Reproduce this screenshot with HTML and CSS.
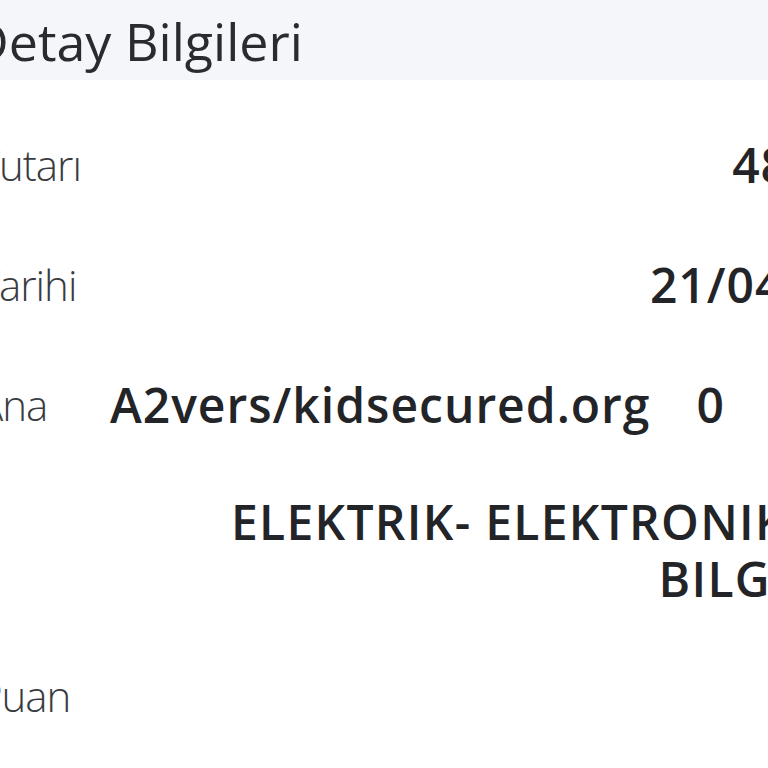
FILE: index.html
```html
<!DOCTYPE html>
<html lang="tr">
<head>
<meta charset="utf-8">
<title>Detay Bilgileri</title>
<link rel="stylesheet" href="styles.css">
</head>
<body>
<div class="page">
  <div class="header"><h1 class="title">Detay Bilgileri</h1></div>
  <div class="list">
    <div class="row"><span class="label">Tutarı</span><span class="value">48,00</span></div>
    <div class="row"><span class="label">Tarihi</span><span class="value">21/04/23</span></div>
    <div class="row"><span class="label">Ana</span><span class="value multi"><span>A2vers/kidsecured.org</span><span>0</span></span></div>
    <div class="row"><span class="label"></span><span class="value caps">ELEKTRIK- ELEKTRONIK VE<br>BILGI VE</span></div>
    <div class="row"><span class="label">Puan</span><span class="value">85</span></div>
  </div>
</div>
</body>
</html>
```
FILE: styles.css
```css
html, body {
  margin: 0;
  padding: 0;
  background: #ffffff;
  overflow: hidden;
}
body {
  width: 768px;
  height: 768px;
  font-family: "Open Sans", "Noto Sans", sans-serif;
  color: #2b2b2e;
}
.page {
  width: 882px;
  margin-left: -22px;
}
.header {
  height: 80px;
  background: #f5f6fa;
  display: flex;
  align-items: center;
  margin-left: -200px;
  padding-left: 193px;
}
.title {
  margin: 0;
  font-size: 52px;
  font-weight: 400;
  line-height: 57px;
  color: #2a2b2f;
}
.list {
  padding-top: 24px;
}
.row {
  display: grid;
  grid-template-columns: 132px 1fr;
  align-items: center;
  padding: 28.5px 0;
}
.label {
  font-size: 42px;
  font-weight: 300;
  line-height: 63px;
  letter-spacing: -1px;
  color: #3a3b3f;
  white-space: nowrap;
}
.value {
  font-size: 48px;
  font-weight: 600;
  line-height: 57px;
  letter-spacing: 1px;
  text-align: right;
  color: #232427;
  white-space: nowrap;
}
.multi {
  display: flex;
  gap: 46px;
  text-align: left;
}
.caps {
  letter-spacing: 1.3px;
}
```
